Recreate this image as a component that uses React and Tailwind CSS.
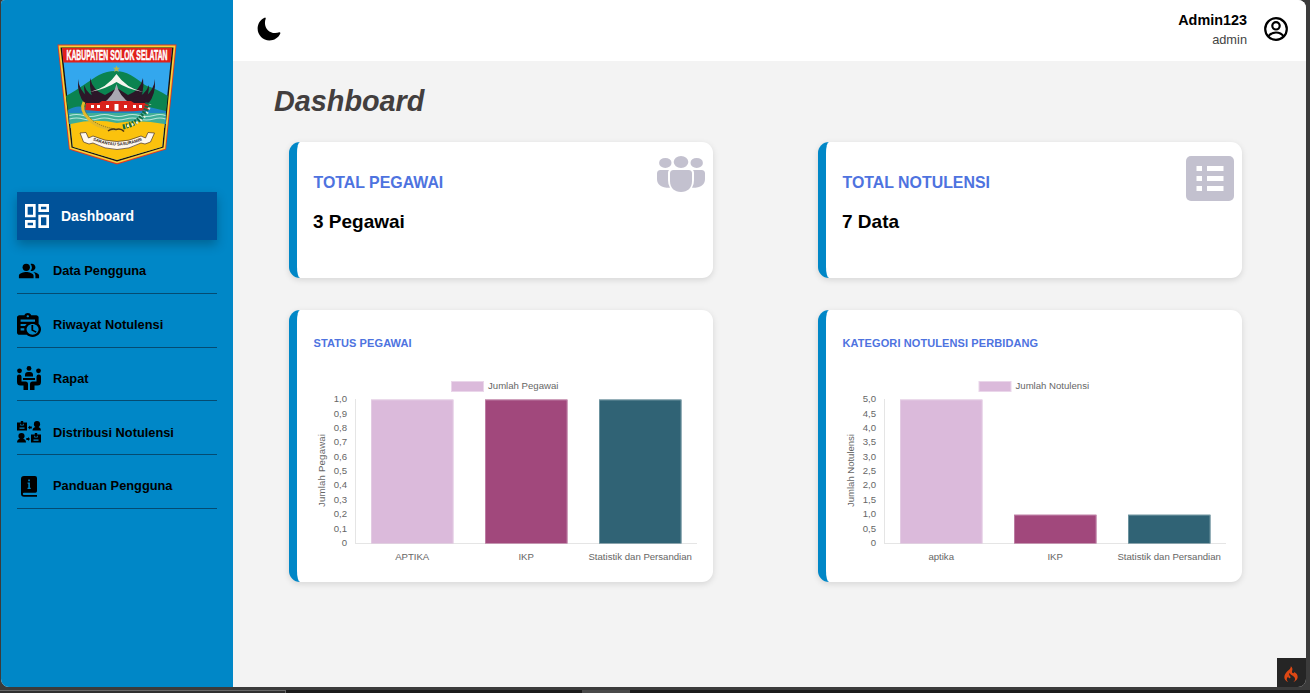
import React from "react";
import { MdOutlineDashboard, MdPeopleAlt } from "react-icons/md";
import { IoMoon } from "react-icons/io5";
import { SiCodeigniter } from "react-icons/si";

function RegionLogo() {
  return (
    <svg width="120" height="121" viewBox="0 0 120 121" className="block">
      <path d="M.5 .5H119.500L109 105.500L60 120.500L12 105.500Z" fill="#e5391f" />
      <path d="M1.500 1.500H118.500L108.200 104.800L60 119.300L12.800 104.800Z" fill="#f6cf3a" />
      <path d="M3.500 3.500H116.500L106.500 103.500L60 117.500L14.500 103.500Z" fill="#171310" />
      <path d="M5 4H115L105.200 102.700L60 116L15.800 102.700Z" fill="#33a7ee" />
      <path d="M5 4H115L113.600 18.500H6.400Z" fill="#e0201b" />
      <path d="M9 52C22 45 33 36 42 31Q54 25 66 28C77 31 84 39 90 42Q100 45 110.800 52L108.800 70H11.500Z" fill="#0b8350" />
      <path d="M11 66Q20 60 30 64L92 63L109 67V80H12Z" fill="#1d86c4" />
      <path d="M12 69H108.700L107.300 84H13.500Z" fill="#3fae98" />
      <g fill="none" stroke="#b9e6dc" strokeWidth="1.200">
        <path d="M12.500 71.500q7-2 14 0t14 0 14 0 14 0 14 0 14 0 12 0" />
        <path d="M12.500 75q7-2 14 0t14 0 14 0 14 0 14 0 14 0 12 0" />
      </g>
      <path d="M13.500 80Q38 74 60 79Q82 75 107.500 80L105.200 102.700L60 116L15.800 102.700Z" fill="#fbc20d" />
      <g fill="#2b1728">
        <path d="M21 35Q22 46 31 53L33 60H28Q20 51 21 35Z" />
        <path d="M27 41Q31 52 42 54L44 60H32Q27 52 27 41Z" />
        <path d="M33 34Q36 47 48 51L60 44L71 51Q83 47 86 34Q88 50 80 60H39Q32 50 33 34Z" />
        <path d="M92 41Q88 52 77 54L75 60H87Q92 52 92 41Z" />
        <path d="M98 35Q97 46 88 53L86 60H91Q99 51 98 35Z" />
      </g>
      <path d="M33 48Q50 44 59.500 30Q69 44 86 48Q70 45 59.500 38Q49 45 33 48Z" fill="#f5f5ef" />
      <path d="M59.500 40Q62 52 74 60H45Q57 52 59.500 40Z" fill="#a9a7b2" />
      <path d="M29 59H42L45 57H74L77 59H91L92 66Q60 69 28 66Z" fill="#d9231c" />
      <g fill="#fff">
        <rect x="34" y="61" width="3" height="3" />
        <rect x="40" y="61" width="3" height="3" />
        <rect x="49" y="61" width="3" height="3" />
        <rect x="57.500" y="60" width="4" height="6.500" />
        <rect x="67" y="61" width="3" height="3" />
        <rect x="76" y="61" width="3" height="3" />
        <rect x="82" y="61" width="3" height="3" />
      </g>
      <path d="M59.500 21.500l1 2.300 2.500 0-2 1.700 .8 2.500-2.300-1.500-2.300 1.500 .8-2.500-2-1.700 2.500 0Z" fill="#b9b548" />
      <path d="M27 58Q23 66 31 74Q38 83 58 86" fill="none" stroke="#e3b92a" strokeWidth="3" />
      <path d="M28.500 60Q26 67 34 75Q41 82 58 85" fill="none" stroke="#7d6a1d" strokeWidth=".9" strokeDasharray="1.200 1" />
      <path d="M51 87Q55 84 59 85.500Q64 84 67 87.500" fill="none" stroke="#493418" strokeWidth="1.500" />
      <path d="M66 83Q88 78 91 58" fill="none" stroke="#126a45" strokeWidth="5" strokeDasharray="2 1.200" />
      <path d="M70 82Q90 78 93 60" fill="none" stroke="#e6f1db" strokeWidth="2.500" strokeDasharray="1.800 3" />
      <path d="M23 89L29 88.500L31.500 94L36 92Q60 103 84 92L88.500 94L91 88.500L97.500 89L93.500 98L88 100L84 99Q60 112 36 99L32 100L26.500 98Z" fill="#fff8ed" stroke="#473329" strokeWidth=".7" />
      <path id="logo-ribbon" d="M31 94Q60 109 90 94" fill="none" />
      <text fontFamily="Liberation Sans, sans-serif" fontSize="4.300" fontWeight="700" fill="#30231f">
        <textPath href="#logo-ribbon" startOffset="50%" textAnchor="middle">SARANTAU SASURAMBI</textPath>
      </text>
      <text transform="translate(60 15.800) scale(.488 1)" textAnchor="middle" fontFamily="Liberation Sans, sans-serif" fontSize="14" fontWeight="700" fill="#fff" stroke="#fff" strokeWidth=".5">KABUPATEN SOLOK SELATAN</text>
    </svg>
  );
}

function HistoryIcon() {
  return (
    <svg width="24" height="24" viewBox="3 1 20 22" preserveAspectRatio="none">
      <path
        fillRule="evenodd"
        d="M21 11.110V5C21 3.900 20.110 3 19 3H14.820C14.400 1.840 13.300 1 12 1S9.600 1.840 9.180 3H5C3.900 3 3 3.900 3 5V19C3 20.110 3.900 21 5 21H11.110C12.370 22.240 14.090 23 16 23C19.870 23 23 19.870 23 16C23 14.090 22.240 12.370 21 11.110ZM12 3C12.550 3 13 3.450 13 4S12.550 5 12 5 11 4.550 11 4 11.450 3 12 3ZM6 7H18V9H6ZM6 11H11.100Q10.200 11.800 9.700 13H6ZM6 15H9.080Q9 16 9.080 17H6ZM16 21C13.240 21 11 18.760 11 16S13.240 11 16 11 21 13.240 21 16 18.760 21 16 21ZM16.500 16.250L19.360 17.940L18.610 19.160L15 17V12H16.500Z"
      />
    </svg>
  );
}

function MeetingIcon() {
  return (
    <svg width="24" height="24" viewBox="0 0 24 24">
      <circle cx="12" cy="2.400" r="2.400" />
      <circle cx="2.500" cy="4.800" r="2.400" />
      <circle cx="21.500" cy="4.800" r="2.400" />
      <path d="M8 10.500V9Q8 6 11 6H13Q16 6 16 9V10.500Z" />
      <path d="M6 12H18V14H6Z" />
      <path d="M0 10.500Q0 8.500 2.200 8.500T4.500 10.500V15.500H8.500Q11 15.500 11 18V24H6.500V19.500H3.500Q0 19.500 0 16Z" />
      <path d="M24 10.500Q24 8.500 21.800 8.500T19.500 10.500V15.500H15.500Q13 15.500 13 18V24H17.500V19.500H20.500Q24 19.500 24 16Z" />
    </svg>
  );
}

function DistributionIcon() {
  return (
    <svg width="24" height="22" viewBox="0 0 24 22">
      <path fillRule="evenodd" d="M0 1.500H3.800V0H6.200V1.500H10V9.500H0ZM3.300 2.800V4.600H6.700V2.800H6V3.800H4V2.800ZM2.500 6.500V7.700H7.500V6.500Z" />
      <circle cx="20" cy="3.200" r="3.100" />
      <path d="M15.500 9.500Q15.500 6.800 18.500 6H21.500Q24 6.800 24 9.500Z" />
      <path d="M11 6.500L13 4.600V5.600H14.800V7.400H13V8.400Z" />
      <circle cx="4.500" cy="15" r="3.100" />
      <path d="M0 21.500Q0 18.500 3 17.700H6Q9 18.500 9 21.500Z" />
      <path d="M13 18L11 16.100V17.100H9.300V18.900H11V19.900Z" />
      <path fillRule="evenodd" d="M14 13.500H17.800V12H20.200V13.500H24V21.500H14ZM17.300 14.800V16.600H20.700V14.800H20V15.800H18V14.800ZM16.500 18.500V19.700H21.500V18.500Z" />
    </svg>
  );
}

function GuideIcon() {
  return (
    <svg width="16" height="21" viewBox="0 0 16 21">
      <path fillRule="evenodd" d="M3 0H14Q16 0 16 2V15Q16 16.700 14.500 16.700H3Q1.800 16.800 1.800 17.900T3 19H16V20.800H3Q0 20.800 0 17.800V3Q0 0 3 0Z" />
      <path d="M7.200 3.600H8.900V5.200H7.200ZM6.600 6.600H8.900V11.700H9.700V13H6.500V11.700H7.300V7.800H6.600Z" fill="#0087c7" />
    </svg>
  );
}

function AccountIcon() {
  return (
    <svg width="24" height="24" viewBox="0 0 24 24" fill="none" stroke="#000" strokeWidth="2.200">
      <circle cx="12" cy="12" r="10.800" />
      <circle cx="12" cy="8.800" r="3.700" />
      <path d="M4.300 19.500Q7 15.500 12 15.500T19.700 19.500" />
    </svg>
  );
}

function PeopleIcon() {
  return (
    <svg width="48" height="36" viewBox="0 0 48 36" fill="#c3c1cf">
      <ellipse cx="8.300" cy="6.900" rx="6.200" ry="5" />
      <ellipse cx="39.700" cy="6.900" rx="6.200" ry="5" />
      <ellipse cx="24" cy="6" rx="7.300" ry="6" />
      <path d="M3.500 14H12Q11 15 11 17V24Q11 29 13 31.800Q0 32 0 23V17.500Q0 14 3.500 14Z" />
      <path d="M44.500 14H36Q37 15 37 17V24Q37 29 35 31.800Q48 32 48 23V17.500Q48 14 44.500 14Z" />
      <path d="M16.500 14H31.500Q35 14 35 17.500V25C35 32 30.500 36 24 36S13 32 13 25V17.500Q13 14 16.500 14Z" />
    </svg>
  );
}

function ListIcon() {
  return (
    <svg width="48" height="45" viewBox="0 0 48 45">
      <rect width="48" height="45" rx="5" fill="#c3c1cf" />
      <g fill="#fff">
        <rect x="10.500" y="10" width="5.500" height="5" />
        <rect x="21" y="10" width="16.500" height="5" />
        <rect x="10.500" y="20" width="5.500" height="5" />
        <rect x="21" y="20" width="16.500" height="5" />
        <rect x="10.500" y="30" width="5.500" height="5" />
        <rect x="21" y="30" width="16.500" height="5" />
      </g>
    </svg>
  );
}

const menu = [
  { label: "Data Pengguna", icon: <MdPeopleAlt size={22} /> },
  { label: "Riwayat Notulensi", icon: <HistoryIcon /> },
  { label: "Rapat", icon: <MeetingIcon /> },
  { label: "Distribusi Notulensi", icon: <DistributionIcon /> },
  { label: "Panduan Pengguna", icon: <GuideIcon /> },
];

function Sidebar() {
  return (
    <aside className="flex w-[232px] shrink-0 flex-col bg-[#0087c7] px-4 pt-11">
      <div className="flex h-[148px] justify-center">
        <RegionLogo />
      </div>
      <a className="flex h-12 items-center bg-[#005299] pl-1 text-sm font-bold text-white shadow-[0_5px_10px_rgba(0,0,0,0.25)]">
        <MdOutlineDashboard size={32} />
        <span className="ml-2">Dashboard</span>
      </a>
      <nav className="flex flex-col">
        {menu.map((item) => (
          <a key={item.label} className="flex h-[53.800px] items-center border-b border-[#044b72] pt-[9px] text-[12.800px] font-bold text-black">
            <span className="flex w-6 justify-center">{item.icon}</span>
            <span className="ml-3">{item.label}</span>
          </a>
        ))}
      </nav>
    </aside>
  );
}

function Header() {
  return (
    <header className="flex h-[61px] shrink-0 items-center justify-between bg-white pr-[18px] pl-6">
      <IoMoon size={26} className="-mt-[3px] -ml-px" />
      <div className="-mt-1 flex items-center gap-4">
        <div className="pt-px pr-px text-right">
          <div className="text-[14.400px] leading-5 font-bold text-black">Admin123</div>
          <div className="text-[12.800px] leading-[19px] text-[#444]">admin</div>
        </div>
        <AccountIcon />
      </div>
    </header>
  );
}

function Card({ children }) {
  return (
    <section className="flex flex-col rounded-[11px] border-l-8 border-[#0087c7] bg-white shadow-[0_2px_6px_rgba(0,0,0,0.12)]">
      {children}
    </section>
  );
}

function StatCard({ title, value, icon }) {
  return (
    <Card>
      <div className="flex justify-between pt-[14px] pr-2 pl-4">
        <div className="pt-[15px]">
          <h2 className="pl-[0.500px] text-[15.900px] leading-6 font-bold text-[#4e73df]">{title}</h2>
          <p className="mt-[13px] text-[19px] leading-7 font-bold text-black">{value}</p>
        </div>
        {icon}
      </div>
    </Card>
  );
}

const barFills = ["#dbbadb", "#a1487c", "#306375"];
const barEdges = ["#ead6ea", "#cf9dbc", "#94b1ba"];

function BarChart({ name, labels, values, max, legendX }) {
  return (
    <svg width="416" height="212" viewBox="0 0 416 212" fontFamily="Liberation Sans, sans-serif" fontSize="9.600" fill="#666">
      <rect x={legendX} y="21.500" width="32" height="10" fill="#dbbadb" stroke="#ead6ea" />
      <text x={legendX + 36.5} y="29">{name}</text>
      <text transform="translate(28 147) rotate(-90)" textLength="73">{name}</text>
      {Array.from({ length: 11 }, (_, i) => (
        <text key={i} x="50" y={186 - i * 14.38} textAnchor="end">
          {i === 0 ? "0" : ((max * i) / 10).toFixed(1).replace(".", ",")}
        </text>
      ))}
      <path d="M58.500 39V183.500M58 183.500H400" stroke="#e5e5e5" fill="none" />
      {values.map((value, i) => {
        const height = (144 * value) / max;
        const x = 74 + i * 114;
        const y = 183.5 - height;
        return (
          <g key={labels[i]}>
            <rect x={x} y={y} width="82.500" height={height} fill={barFills[i]} />
            <path d={`M${x + 0.5} 183.5V${y + 0.5}H${x + 82}V183.5`} stroke={barEdges[i]} strokeWidth=".6" fill="none" />
            <text x={x + 41.2} y="200" textAnchor="middle">{labels[i]}</text>
          </g>
        );
      })}
    </svg>
  );
}

function ChartCard({ title, ...chart }) {
  return (
    <Card>
      <h2 className="pt-[25px] pl-[16.500px] text-[11px] leading-4 font-bold tracking-[0.100px] text-[#4e73df]">{title}</h2>
      <div className="mt-[9px]">
        <BarChart {...chart} />
      </div>
    </Card>
  );
}

export default function App() {
  return (
    <div className="flex h-[693px] w-[1310px] flex-col overflow-hidden bg-[#3b3b3b] font-['Liberation_Sans',Arial,sans-serif]">
      <div className="relative ml-px flex h-[687px] w-[1305px] shrink-0 overflow-hidden rounded-lg rounded-tl-[4px] bg-[#f3f3f3]">
        <Sidebar />
        <div className="flex grow flex-col">
          <Header />
          <main className="px-[41px] pt-[22px]">
            <h1 className="text-[28.800px] leading-9 font-bold text-[#423e3e] italic">Dashboard</h1>
            <div className="mt-[23px] ml-[15px] grid grid-cols-[424px_424px] grid-rows-[136px_272px] gap-x-[105px] gap-y-8">
              <StatCard title="TOTAL PEGAWAI" value="3 Pegawai" icon={<PeopleIcon />} />
              <StatCard title="TOTAL NOTULENSI" value="7 Data" icon={<ListIcon />} />
              <ChartCard title="STATUS PEGAWAI" name="Jumlah Pegawai" labels={["APTIKA", "IKP", "Statistik dan Persandian"]} values={[1, 1, 1]} max={1} legendX={154.5} />
              <ChartCard title="KATEGORI NOTULENSI PERBIDANG" name="Jumlah Notulensi" labels={["aptika", "IKP", "Statistik dan Persandian"]} values={[5, 1, 1]} max={5} legendX={153} />
            </div>
          </main>
        </div>
        <div className="absolute right-0 bottom-0 flex h-[29px] w-[29px] items-center justify-center bg-[#252525] pr-[2px] text-[#dd4814]">
          <SiCodeigniter size={16} className="mt-[2px]" />
        </div>
      </div>
      <div className="mt-[3px] flex h-[3px]">
        <div className="w-[286px] border-t border-r border-[#686868] bg-[#303030]" />
        <div className="w-[296px] bg-[#1b1b1b]" />
        <div className="w-12 bg-[#494949]" />
        <div className="grow bg-[#1b1b1b]" />
      </div>
    </div>
  );
}
